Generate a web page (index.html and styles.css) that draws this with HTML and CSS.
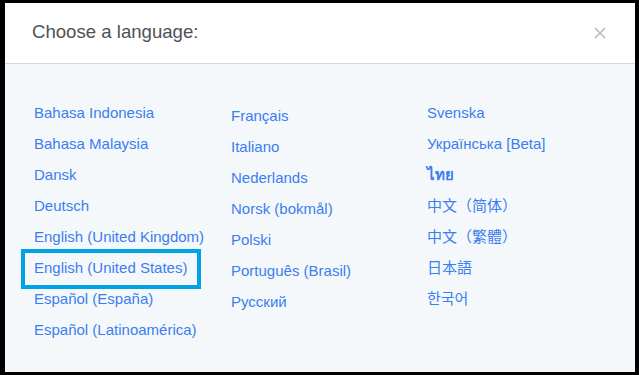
FILE: index.html
```html
<!DOCTYPE html>
<html lang="en">
<head>
    <meta charset="UTF-8">
    <meta name="viewport" content="width=device-width, initial-scale=1.0">
    <title>Choose a language</title>
    <link rel="stylesheet" href="styles.css">
</head>
<body>
    <div class="modal">
        <div class="modal-header">
            <h2>Choose a language:</h2>
            <button class="close" aria-label="Close">
                <svg width="12" height="12" viewBox="0 0 12 12">
                    <path d="M1 1 L11 11 M11 1 L1 11" stroke="#b4bcc4" stroke-width="1.6" fill="none"/>
                </svg>
            </button>
        </div>
        <div class="modal-body">
            <ul class="col">
                <li><a href="#">Bahasa Indonesia</a></li>
                <li><a href="#">Bahasa Malaysia</a></li>
                <li><a href="#">Dansk</a></li>
                <li><a href="#">Deutsch</a></li>
                <li><a href="#">English (United Kingdom)</a></li>
                <li class="selected"><a href="#">English (United States)</a></li>
                <li><a href="#">Español (España)</a></li>
                <li><a href="#">Español (Latinoamérica)</a></li>
            </ul>
            <ul class="col col-mid">
                <li><a href="#">Français</a></li>
                <li><a href="#">Italiano</a></li>
                <li><a href="#">Nederlands</a></li>
                <li><a href="#">Norsk (bokmål)</a></li>
                <li><a href="#">Polski</a></li>
                <li><a href="#">Português (Brasil)</a></li>
                <li><a href="#">Русский</a></li>
            </ul>
            <ul class="col col-last">
                <li><a href="#">Svenska</a></li>
                <li><a href="#">Українська [Beta]</a></li>
                <li><a href="#" class="thai">ไทย</a></li>
                <li><a href="#" class="cjk">中文（简体）</a></li>
                <li><a href="#" class="cjk">中文（繁體）</a></li>
                <li><a href="#" class="cjk">日本語</a></li>
                <li><a href="#" class="cjk kr">한국어</a></li>
            </ul>
        </div>
    </div>
</body>
</html>
```

FILE: styles.css
```css
html, body {
    margin: 0;
    height: 100%;
}
body {
    background: #000;
    font-family: "Liberation Sans", Arial, sans-serif;
    padding: 3px 4px 3px 5px;
    box-sizing: border-box;
}
.modal {
    height: 100%;
    background: #f5f8fb;
    display: flex;
    flex-direction: column;
}
.modal-header {
    height: 60px;
    background: #fff;
    border-bottom: 1px solid #d4d8dd;
    display: flex;
    align-items: center;
    justify-content: space-between;
    padding: 0 29px 0 27px;
    flex-shrink: 0;
}
.modal-header h2 {
    margin: 0;
    font-size: 18.6px;
    font-weight: normal;
    color: #4d5257;
    padding-bottom: 2px;
}
.close {
    background: none;
    border: none;
    padding: 0;
    cursor: pointer;
    display: flex;
}
.modal-body {
    display: flex;
    padding: 33px 0 0 29px;
}
.col {
    list-style: none;
    margin: 0;
    padding: 0;
    width: 197px;
}
.col-mid {
    padding-top: 3px;
    width: 196px;
}
.col li {
    height: 31px;
    line-height: 31px;
    font-size: 15px;
    position: relative;
}
.col a {
    color: #3a7ef0;
    text-decoration: none;
}
.cjk {
    font-family: "Liberation Sans", "Noto Sans CJK SC", sans-serif;
}
.thai {
    font-weight: bold;
    color: #4a78c8;
}
.selected::before {
    content: "";
    position: absolute;
    left: -13px;
    top: -3px;
    width: 172px;
    height: 32px;
    border: 4px solid #00a3e6;
}
```
